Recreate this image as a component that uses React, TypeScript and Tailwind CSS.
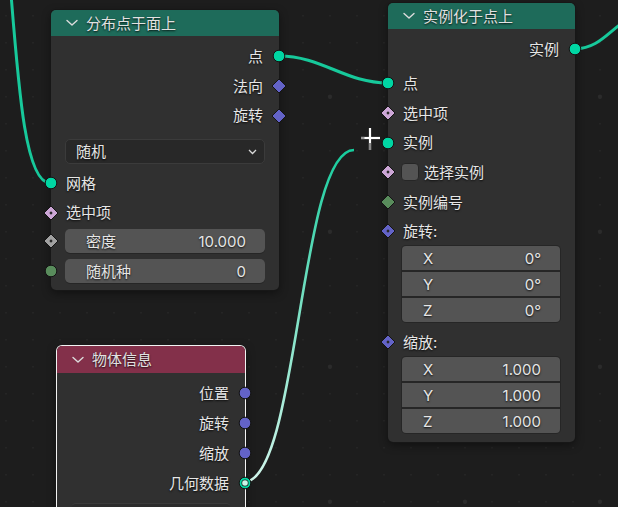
import React from 'react';

type Kind = 'circle' | 'diamond' | 'diamondDot' | 'hollow';

function Socket({ kind, color, side }: { kind: Kind; color: string; side: 'l' | 'r' }) {
  const pos = side === 'l' ? 'left-[-8px]' : 'right-[-8px]';
  return (
    <svg
      className={`absolute ${pos} top-1/2 -translate-y-1/2 z-10 overflow-visible`}
      width="16"
      height="16"
      viewBox="0 0 16 16"
    >
      {kind === 'circle' && <circle cx="8" cy="8" r="5.8" fill={color} stroke="#141414" strokeWidth="1" />}
      {kind === 'hollow' && (
        <>
          <circle cx="8" cy="8" r="5.8" fill="#00d6a3" stroke="#141414" strokeWidth="1" />
          <circle cx="8" cy="8" r="3.6" fill="#1e2a27" />
          <circle cx="8" cy="8" r="2.8" fill="#c9f5e8" />
        </>
      )}
      {(kind === 'diamond' || kind === 'diamondDot') && (
        <polygon points="8,1 15,8 8,15 1,8" fill={color} stroke="#141414" strokeWidth="1" />
      )}
      {kind === 'diamondDot' && <polygon points="8,6.3 9.7,8 8,9.7 6.3,8" fill="#262626" />}
    </svg>
  );
}

function Chevron() {
  return (
    <svg width="12" height="8" viewBox="0 0 12 8" className="shrink-0">
      <polyline points="1,1.5 6,6 11,1.5" fill="none" stroke="#dcdcdc" strokeWidth="1.4" strokeLinecap="round" strokeLinejoin="round" />
    </svg>
  );
}

function Out({ label, kind, color, h }: { label: string; kind: Kind; color: string; h: string }) {
  return (
    <div className={`relative flex items-center justify-end pr-[16px] ${h}`}>
      <span>{label}</span>
      <Socket kind={kind} color={color} side="r" />
    </div>
  );
}

function In({ label, kind, color, h, extra = '' }: { label: string; kind: Kind; color: string; h: string; extra?: string }) {
  return (
    <div className={`relative flex items-center pl-[15px] ${h} ${extra}`}>
      <span>{label}</span>
      <Socket kind={kind} color={color} side="l" />
    </div>
  );
}

function Field({ label, value, kind, color, extra }: { label: string; value: string; kind: Kind; color: string; extra: string }) {
  return (
    <div className={`relative h-[24px] ${extra}`}>
      <Socket kind={kind} color={color} side="l" />
      <div className="mx-[14px] h-full rounded-[5px] bg-[#545454] shadow-[0_1px_0_#262626] flex items-center justify-between pl-[21px] pr-[19px]">
        <span>{label}</span>
        <span>{value}</span>
      </div>
    </div>
  );
}

function VecBlock({ values }: { values: string[] }) {
  const axes = ['X', 'Y', 'Z'];
  return (
    <div className="ml-[13px] mr-[14px] rounded-[5px] bg-[#262626] p-[1px] flex flex-col gap-[2px]">
      {values.map((v, i) => (
        <div
          key={i}
          className={`h-[24px] bg-[#545454] flex items-center justify-between pl-[21px] pr-[19px] ${i === 0 ? 'rounded-t-[4px]' : ''} ${i === 2 ? 'rounded-b-[4px]' : ''}`}
        >
          <span>{axes[i]}</span>
          <span>{v}</span>
        </div>
      ))}
    </div>
  );
}

function Node({
  pos,
  title,
  headerBg,
  headerH,
  active = false,
  children,
}: {
  pos: string;
  title: string;
  headerBg: string;
  headerH: string;
  active?: boolean;
  children: React.ReactNode;
}) {
  return (
    <div
      className={`absolute rounded-[5px] bg-[#303030] ${pos} ${
        active
          ? 'shadow-[0_0_0_1px_#f2f2f2,0_3px_10px_rgba(0,0,0,0.5)]'
          : 'shadow-[0_0_0_1px_#171717,0_3px_10px_rgba(0,0,0,0.45)]'
      }`}
    >
      <div className={`rounded-t-[5px] flex items-center pl-[15px] gap-[8px] ${headerH} ${headerBg}`}>
        <Chevron />
        <span className="text-[#e2e2e2]">{title}</span>
      </div>
      {children}
    </div>
  );
}

export default function App() {
  const dots: { x: number; y: number; big: boolean }[] = [];
  for (let i = 0; i < 24; i++) {
    for (let j = 0; j < 20; j++) {
      const x = 6 + i * 27;
      const y = 15.7 + j * 27;
      const big = (i - 12) % 5 === 0 && (j - 3) % 5 === 0;
      dots.push({ x, y, big });
    }
  }

  return (
    <div className="relative w-full h-[507px] overflow-hidden bg-[#1d1d1d] font-['Inter','Noto_Sans_CJK_SC',sans-serif] text-[15px] leading-none text-[#e6e6e6] [text-shadow:0_1px_2px_rgba(0,0,0,0.85)]">
      {/* grid */}
      <svg className="absolute inset-0 w-full h-full" width="618" height="507">
        {dots.map((d, k) =>
          d.big ? (
            <circle key={k} cx={d.x} cy={d.y} r="2.2" fill="#2b2b2b" />
          ) : (
            <circle key={k} cx={d.x} cy={d.y} r="1" fill="#262626" />
          )
        )}
      </svg>

      {/* links */}
      <svg className="absolute inset-0 w-full h-full pointer-events-none" width="618" height="507">
        <defs>
          <linearGradient id="drag" gradientUnits="userSpaceOnUse" x1="244" y1="482" x2="354" y2="150">
            <stop offset="0" stopColor="#d2f6ec" />
            <stop offset="0.5" stopColor="#7fe2c6" />
            <stop offset="1" stopColor="#14cc9c" />
          </linearGradient>
        </defs>
        <path d="M 11 -6 C 19 95, 26 183, 50 183" fill="none" stroke="#17c99b" strokeWidth="3" />
        <path d="M 279 56 C 322 56, 345 83, 388 83" fill="none" stroke="#17c99b" strokeWidth="3" />
        <path d="M 575 49 C 598 48, 606 34, 626 20" fill="none" stroke="#17c99b" strokeWidth="3" />
        <path d="M 244 482 C 299 482, 299 150, 354 150" fill="none" stroke="url(#drag)" strokeWidth="2.6" />
      </svg>

      {/* Node 1 */}
      <Node pos="left-[51px] top-[10px] w-[228px]" title="分布点于面上" headerBg="bg-[#1e6b5a]" headerH="h-[26px]">
        <div className="pt-[5px] pb-[7px] flex flex-col">
          <Out label="点" kind="circle" color="#00d6a3" h="h-[30px]" />
          <Out label="法向" kind="diamond" color="#6363c7" h="h-[30px]" />
          <Out label="旋转" kind="diamond" color="#6363c7" h="h-[29px]" />
          <div className="mt-[9px] mx-[14px] h-[25px] rounded-[5px] bg-[#282828] border border-[#3b3b3b] flex items-center justify-between pl-[10px] pr-[7px]">
            <span>随机</span>
            <svg width="9" height="6" viewBox="0 0 9 6">
              <polyline points="1,1 4.5,4.5 8,1" fill="none" stroke="#d8d8d8" strokeWidth="1.3" />
            </svg>
          </div>
          <In label="网格" kind="circle" color="#00d6a3" h="h-[30px]" extra="mt-[4px]" />
          <In label="选中项" kind="diamondDot" color="#cca6d6" h="h-[29px]" />
          <Field label="密度" value="10.000" kind="diamondDot" color="#a1a1a1" extra="mt-[2px]" />
          <Field label="随机种" value="0" kind="circle" color="#598c5c" extra="mt-[6px]" />
        </div>
      </Node>

      {/* Node 2 */}
      <Node pos="left-[388px] top-[3px] w-[187px]" title="实例化于点上" headerBg="bg-[#1e6b5a]" headerH="h-[26px]">
        <div className="pt-[5px] pb-[8px] flex flex-col">
          <Out label="实例" kind="circle" color="#00d6a3" h="h-[30px]" />
          <In label="点" kind="circle" color="#00d6a3" h="h-[30px]" extra="mt-[4px]" />
          <In label="选中项" kind="diamondDot" color="#cca6d6" h="h-[30px]" />
          <In label="实例" kind="circle" color="#00d6a3" h="h-[29px]" />
          <div className="relative h-[30px] flex items-center pl-[13px] gap-[5px]">
            <Socket kind="diamondDot" color="#cca6d6" side="l" />
            <span className="w-[18px] h-[18px] rounded-[4px] bg-[#545454] border border-[#262626]" />
            <span>选择实例</span>
          </div>
          <In label="实例编号" kind="diamond" color="#598c5c" h="h-[30px]" />
          <In label="旋转:" kind="diamondDot" color="#6363c7" h="h-[28px]" />
          <VecBlock values={['0°', '0°', '0°']} />
          <In label="缩放:" kind="diamondDot" color="#6363c7" h="h-[28px]" extra="mt-[5px]" />
          <VecBlock values={['1.000', '1.000', '1.000']} />
        </div>
      </Node>

      {/* Node 3 */}
      <Node pos="left-[57px] top-[346px] w-[188px]" title="物体信息" headerBg="bg-[#83304a]" headerH="h-[27px]" active>
        <div className="pt-[5px] pb-[8px] flex flex-col">
          <Out label="位置" kind="circle" color="#6363c7" h="h-[30px]" />
          <Out label="旋转" kind="circle" color="#6363c7" h="h-[30px]" />
          <Out label="缩放" kind="circle" color="#6363c7" h="h-[30px]" />
          <Out label="几何数据" kind="hollow" color="#00d6a3" h="h-[30px]" />
          <div className="mt-[5px] mx-[14px] h-[24px] rounded-[5px] bg-[#2c2c2c] border-t border-[#3a3a3a]" />
        </div>
      </Node>

      {/* cursor */}
      <svg className="absolute left-[358px] top-[126px] pointer-events-none" width="26" height="27" viewBox="0 0 26 27">
        <line x1="3" y1="12" x2="22" y2="12" stroke="#ffffff" strokeWidth="2.2" />
        <line x1="12" y1="2" x2="12" y2="24" stroke="#ffffff" strokeWidth="2.2" />
        <line x1="3" y1="12" x2="6.5" y2="12" stroke="#9a9a9a" strokeWidth="2.2" />
        <line x1="12" y1="17" x2="12" y2="24" stroke="#8a8a8a" strokeWidth="2.2" />
      </svg>
    </div>
  );
}
